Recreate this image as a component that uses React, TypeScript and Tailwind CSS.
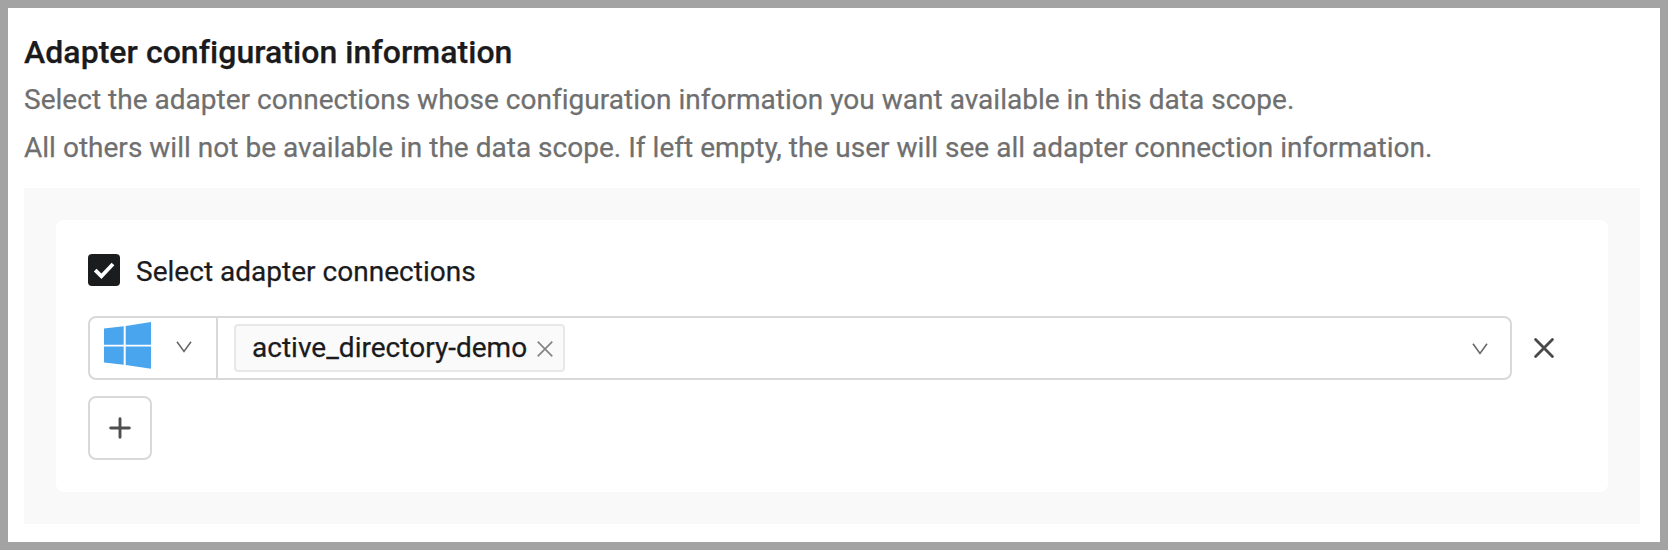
import React from "react";

const Chevron = ({ className = "" }: { className?: string }) => (
  <svg className={className} width="16" height="12" viewBox="0 0 16 12" fill="none" stroke="#68686a" strokeWidth="1.6">
    <path d="M1 0.8 8 10.4 15 0.8" />
  </svg>
);

export default function App() {
  return (
    <div className="flex h-[550px] w-[1668px] flex-col border-8 border-[#a3a3a3] bg-white pl-4 pr-5 font-[Roboto,sans-serif] tracking-[0.018px] text-[#1b1b1d] [-webkit-text-stroke:0.25px]">
      <h1 className="mt-6 h-10 whitespace-nowrap text-[32px] font-medium leading-10 tracking-[0.045px]">Adapter configuration information</h1>
      <p className="mt-1 h-12 whitespace-nowrap text-[28px] leading-[48px] text-[#6f6f6f]">Select the adapter connections whose configuration information you want available in this data scope.</p>
      <p className="h-12 whitespace-nowrap text-[28px] leading-[48px] text-[#6f6f6f]">All others will not be available in the data scope. If left empty, the user will see all adapter connection information.</p>
      <section className="mt-4 h-[336px] bg-[#f9f9f9] p-8">
        <div className="h-[272px] rounded-lg bg-white px-8 pt-8">
          <label className="flex h-9 items-center gap-4">
            <span className="flex size-8 items-center justify-center rounded bg-[#1b1c1e]">
              <svg width="22" height="18" viewBox="0 0 22 18" fill="none" stroke="#fff" strokeWidth="3.8"><path d="M2.2 9.2 8.4 15.2 20 3" /></svg>
            </span>
            <span className="pt-[3px] text-[28px]">Select adapter connections</span>
          </label>
          <div className="mt-7 flex items-center">
            <div className="flex h-16 w-[1424px] rounded-lg border-2 border-[#d9d9d9]">
              <div className="flex w-[128px] items-center gap-[25px] border-r-2 border-[#d9d9d9] pl-[14px]">
                <svg width="47" height="52" viewBox="0 0 47 52" fill="#4aa5ef"><path d="M0 6.6 19.7 4.3V22.7H0ZM21.7 4 47 0V22.7H21.7ZM0 24.6H19.7V42.7L0 40.4ZM21.7 24.6H47V46.8L21.7 43Z" /></svg>
                <Chevron className="mb-[2px]" />
              </div>
              <div className="flex flex-1 items-center justify-between pl-4 pr-[22px]">
                <div className="flex h-12 items-center gap-[10px] rounded border-2 border-[#e8e8e8] bg-[#fafafa] pl-4 pr-[10px]">
                  <span className="text-[28px]">active_directory-demo</span>
                  <svg className="mt-[2px]" width="16" height="16" viewBox="0 0 16 16" stroke="#848486" strokeWidth="1.7"><path d="m.7 .7 14.6 14.6M15.3 .7.7 15.3" /></svg>
                </div>
                <Chevron className="mt-[2px]" />
              </div>
            </div>
            <svg className="ml-[22px]" width="20" height="20" viewBox="0 0 20 20" stroke="#4a4a4c" strokeWidth="2.8" strokeLinecap="round"><path d="m1.6 1.6 16.8 16.8M18.4 1.6 1.6 18.4" /></svg>
          </div>
          <button className="mt-4 flex size-16 items-center justify-center rounded-lg border-2 border-[#d9d9d9]">
            <svg width="22" height="22" viewBox="0 0 22 22" stroke="#4f4f50" strokeWidth="2.9" strokeLinecap="round"><path d="M11 1.7V20.3M1.7 11H20.3" /></svg>
          </button>
        </div>
      </section>
    </div>
  );
}
